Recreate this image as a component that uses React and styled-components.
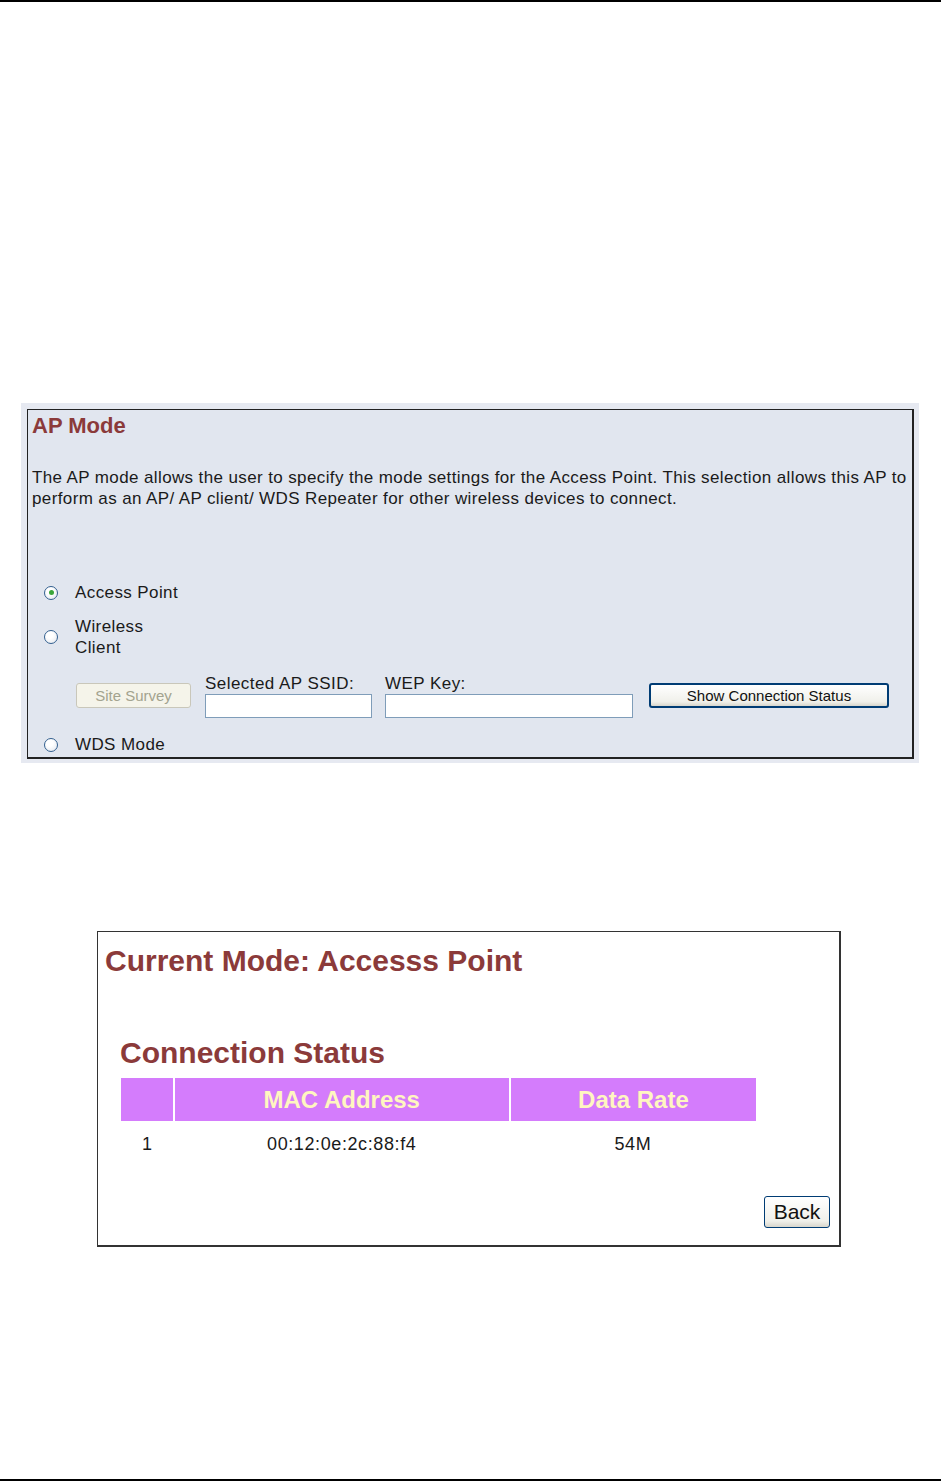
import React from 'react'
import styled, { createGlobalStyle } from 'styled-components'

const GlobalStyle = createGlobalStyle`
    body {
        margin: 0;
        background: white;
        font-family: "Liberation Sans", Arial, sans-serif;
        color: #111;
    }
`

const Page = styled.div`
    width: 941px;
    height: 1481px;
    box-sizing: border-box;
    border-top: 2px solid black;
    border-bottom: 2px solid black;
    display: flex;
    flex-direction: column;
`

const ModeFrame = styled.div`
    margin: 401px 0 0 21px;
    width: 898px;
    height: 360px;
    box-sizing: border-box;
    padding: 6px 5px 4px 6px;
    background: #e6e9f1;
`

const ModePanel = styled.div`
    height: 100%;
    box-sizing: border-box;
    border: 1px solid #222;
    border-right-width: 2px;
    border-bottom-width: 2px;
    background: #e1e6ef;
    padding: 3px 4px 0 4px;
`

const Heading = styled.h2`
    margin: 0;
    font-size: ${p => p.size}px;
    font-weight: bold;
    color: #8b3a3a;
    line-height: ${p => p.lh}px;
    padding-left: ${p => p.indent || 0}px;
`

const Description = styled.p`
    margin: 28px 0 0 0;
    font-size: 17px;
    line-height: 21px;
    letter-spacing: 0.38px;
    color: #1a1a1a;
`

const Options = styled.div`
    margin-top: 73px;
    padding-left: 10px;
    display: flex;
    flex-direction: column;
`

const Option = styled.label`
    display: flex;
    align-items: center;
    gap: 17px;
    font-size: 17px;
    letter-spacing: 0.4px;
    line-height: 21px;
    color: #1a1a1a;
    margin-bottom: ${p => p.gap || 0}px;
`

const Radio = styled.span`
    width: 14px;
    height: 14px;
    margin-left: 2px;
    box-sizing: border-box;
    border-radius: 50%;
    border: 1px solid #33608f;
    background: radial-gradient(circle at 40% 35%, #ffffff 30%, #dfe4ec 100%);
    display: flex;
    align-items: center;
    justify-content: center;
    flex: none;

    &::after {
        content: '';
        width: 5px;
        height: 5px;
        border-radius: 50%;
        background: ${p => (p.checked ? '#3aa53a' : 'transparent')};
    }
`

const ClientRow = styled.div`
    display: flex;
    align-items: flex-end;
    padding-left: 34px;
    margin: 15px 0 16px 0;
`

const Field = styled.div`
    display: flex;
    flex-direction: column;
    margin-left: ${p => p.left}px;
`

const FieldLabel = styled.span`
    font-size: 17px;
    line-height: 21px;
    letter-spacing: 0.45px;
    color: #1a1a1a;
`

const TextInput = styled.input`
    width: ${p => p.w}px;
    height: 24px;
    box-sizing: border-box;
    border: 1px solid #7f9db9;
    background: white;
    outline: 0;
    margin: 0;
`

const XpButton = styled.button`
    height: ${p => p.h}px;
    width: ${p => p.w}px;
    margin: 0 0 ${p => p.bottom || 0}px ${p => p.left || 0}px;
    padding: 0;
    box-sizing: border-box;
    font-family: "Liberation Sans", Arial, sans-serif;
    font-size: ${p => p.fs}px;
    letter-spacing: ${p => p.ls || 0}px;
    color: ${p => (p.disabled ? '#a3a38f' : '#111')};
    border-radius: 3px;
    border: 1px solid ${p => (p.disabled ? '#c9c7ba' : '#003c74')};
    border-width: ${p => (p.strong ? '2px' : '1px')};
    background: ${p => (p.disabled
        ? '#f5f4ea'
        : 'linear-gradient(#ffffff, #f0f0ea 80%, #d8d6cc)')};
`

const StatusPanel = styled.div`
    margin: 168px 0 0 97px;
    width: 744px;
    height: 316px;
    box-sizing: border-box;
    border: 1px solid #333;
    border-right-width: 2px;
    border-bottom-width: 2px;
    background: white;
    padding: 13px 8px 0 7px;
    display: flex;
    flex-direction: column;
`

const Table = styled.table`
    margin: 9px 0 0 16px;
    border-collapse: collapse;
    width: 635px;
`

const HeadCell = styled.th`
    background: #d47cfc;
    color: #fff6c0;
    font-size: 24px;
    font-weight: bold;
    height: 43px;
    padding: 0;
    border-left: 2px solid white;
    width: ${p => p.w}px;

    &:first-child {
        border-left: 0;
    }
`

const Cell = styled.td`
    text-align: center;
    font-size: 18px;
    letter-spacing: 0.6px;
    height: 46px;
    padding: 0;
    color: #1a1a1a;
`

const Footer = styled.div`
    display: flex;
    justify-content: flex-end;
    margin-top: 29px;
    padding-right: 1px;
`

export default function App() {
    return (
        <>
            <GlobalStyle />
            <Page>
                <ModeFrame>
                    <ModePanel>
                        <Heading size={22} lh={26}>AP Mode</Heading>
                        <Description>
                            The AP mode allows the user to specify the mode settings for the Access Point. This selection allows this AP to perform as an AP/ AP client/ WDS Repeater for other wireless devices to connect.
                        </Description>
                        <Options>
                            <Option gap={13}>
                                <Radio checked />
                                <span>Access Point</span>
                            </Option>
                            <Option>
                                <Radio />
                                <span>Wireless<br />Client</span>
                            </Option>
                            <ClientRow>
                                <XpButton disabled w={115} h={25} fs={15} bottom={10}>Site Survey</XpButton>
                                <Field left={14}>
                                    <FieldLabel>Selected AP SSID:</FieldLabel>
                                    <TextInput w={167} />
                                </Field>
                                <Field left={13}>
                                    <FieldLabel>WEP Key:</FieldLabel>
                                    <TextInput w={248} />
                                </Field>
                                <XpButton strong w={240} h={25} fs={15} bottom={10} left={16}>Show Connection Status</XpButton>
                            </ClientRow>
                            <Option>
                                <Radio />
                                <span>WDS Mode</span>
                            </Option>
                        </Options>
                    </ModePanel>
                </ModeFrame>

                <StatusPanel>
                    <Heading size={30} lh={32}>Current Mode: Accesss Point</Heading>
                    <Heading size={30} lh={32} indent={15} style={{ marginTop: 60 }}>Connection Status</Heading>
                    <Table>
                        <thead>
                            <tr>
                                <HeadCell w={52} />
                                <HeadCell w={336}>MAC Address</HeadCell>
                                <HeadCell w={247}>Data Rate</HeadCell>
                            </tr>
                        </thead>
                        <tbody>
                            <tr>
                                <Cell>1</Cell>
                                <Cell>00:12:0e:2c:88:f4</Cell>
                                <Cell>54M</Cell>
                            </tr>
                        </tbody>
                    </Table>
                    <Footer>
                        <XpButton w={66} h={32} fs={21}>Back</XpButton>
                    </Footer>
                </StatusPanel>
            </Page>
        </>
    )
}
